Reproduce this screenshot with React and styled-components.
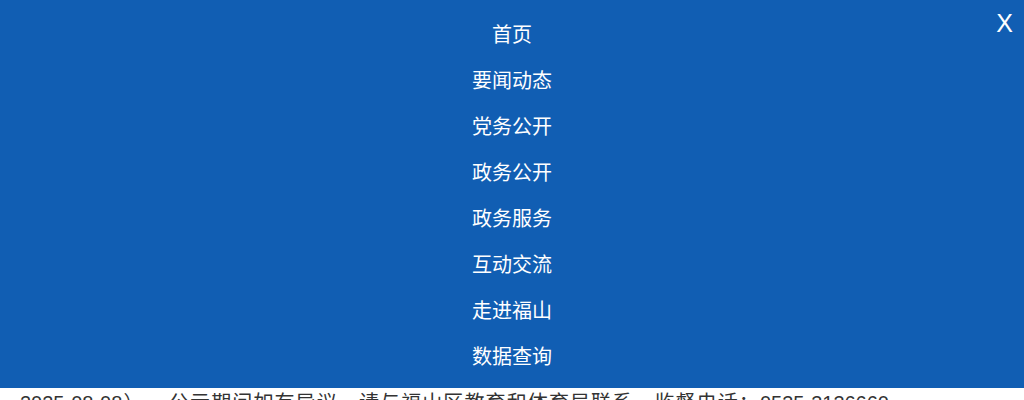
import React from 'react'
import styled, { createGlobalStyle } from 'styled-components'

const GlobalStyle = createGlobalStyle`
  html, body {
    margin: 0;
    padding: 0;
    background: #fff;
    font-family: "Liberation Sans", "Noto Sans CJK SC", sans-serif;
    overflow: hidden;
  }
`

const menuItems = ['首页', '要闻动态', '党务公开', '政务公开', '政务服务', '互动交流', '走进福山', '数据查询']

const Page = styled.main`
  padding: 388px 20px 0;
  height: 400px;
  box-sizing: border-box;
`

// justified paragraph: the ideographs get spread out, the digits keep their width
const Notice = styled.p`
  width: 869px;
  margin: 0;
  font-size: 20px;
  line-height: 30px;
  color: #333;
  white-space: nowrap;
  text-align: justify;
  text-align-last: justify;
`

const Overlay = styled.nav`
  position: fixed;
  top: 0;
  left: 0;
  right: 0;
  height: 388px;
  background: #115eb3;
  z-index: 10;
`

const MenuList = styled.ul`
  list-style: none;
  margin: 0;
  padding: 11px 0 9px;
  display: flex;
  flex-direction: column;
  align-items: center;
`

const MenuItem = styled.li`
  height: 46px;
  line-height: 46px;
  font-family: "Noto Sans CJK SC", sans-serif;
  font-size: 20px;
  color: #fff;
  cursor: pointer;
`

const CloseButton = styled.button`
  position: absolute;
  top: 7px;
  right: 11px;
  border: none;
  background: transparent;
  padding: 0;
  color: #fff;
  font-family: "Liberation Sans", sans-serif;
  font-size: 25px;
  line-height: 32px;
  cursor: pointer;
`

const App = () => {
  return (
    <>
      <GlobalStyle />
      <Page>
        <Notice>2025-08-08），&nbsp; 公示期间如有异议，请与福山区教育和体育局联系，监督电话：0535-3136660</Notice>
      </Page>
      <Overlay>
        <MenuList>
          {menuItems.map((m) => (
            <MenuItem key={m}>{m}</MenuItem>
          ))}
        </MenuList>
        <CloseButton type="button">X</CloseButton>
      </Overlay>
    </>
  )
}

export default App
